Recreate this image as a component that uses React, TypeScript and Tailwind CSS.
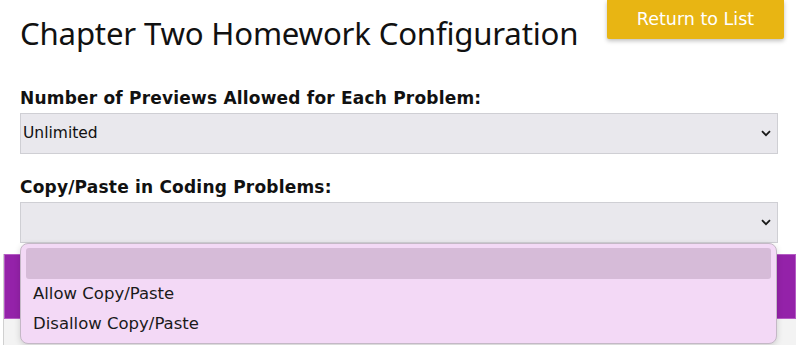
import React from "react";

function Chevron() {
  return (
    <svg width="10" height="7" viewBox="0 0 10 7" className="shrink-0">
      <path d="M1 1.2 L5 5.2 L9 1.2" fill="none" stroke="#1a1a1a" strokeWidth="1.8" />
    </svg>
  );
}

export default function App() {
  return (
    <div className="relative w-[800px] h-[345px] overflow-hidden bg-white">
      <div className="px-5">
        <div className="flex items-start justify-between">
          <h1 className="mt-[13px] text-[31.2px] leading-[40px] text-[#111] [font-family:'Noto_Sans',sans-serif] tracking-[-0.2px]">
            Chapter Two Homework Configuration
          </h1>
          <button className="mr-[-4px] w-[177px] h-[39px] bg-[#e8b513] text-white text-[17.5px] [font-family:'DejaVu_Sans',sans-serif] shadow-[0_2px_4px_rgba(0,0,0,0.25)] rounded-b-[2px]">
            Return to List
          </button>
        </div>
        <div className="mt-[35px] text-[17px] tracking-[0.2px] font-bold text-[#111] [font-family:'DejaVu_Sans',sans-serif] leading-[20px]">
          Number of Previews Allowed for Each Problem:
        </div>
        <div className="mt-[5px] h-[41px] w-[758px] bg-[#e9e8ed] border border-[#cfcfd4] flex items-center justify-between pl-[2px] pr-[6px]">
          <span className="text-[15.5px] text-[#111] [font-family:'DejaVu_Sans',sans-serif]">Unlimited</span>
          <Chevron />
        </div>
        <div className="mt-[23px] text-[17px] tracking-[0.2px] font-bold text-[#111] [font-family:'DejaVu_Sans',sans-serif] leading-[20px]">
          Copy/Paste in Coding Problems:
        </div>
        <div className="mt-[5px] h-[41px] w-[758px] bg-[#e9e8ed] border border-[#cfcfd4] flex items-center justify-end pr-[6px]">
          <Chevron />
        </div>
      </div>
      <div className="mt-[11px] mx-[3px] w-[793px] border-l border-[#d0d0d0]">
        <div className="h-[65px] bg-[#9422a9] border border-[#b55cc4]"></div>
        <div className="h-[40px] bg-[#f3f3f3]"></div>
      </div>
      <div className="absolute left-[20px] top-[243px] w-[757px] h-[101px] rounded-[8px] border border-[#c4b8c6] bg-[#f3d9f6] shadow-[0_2px_6px_rgba(0,0,0,0.15)] px-[5px] pt-[4px] [font-family:'DejaVu_Sans',sans-serif]">
        <div className="h-[31px] rounded-[3px] bg-[#d6bbd8]"></div>
        <div className="h-[30px] pt-[1px] flex items-center pl-[7px] text-[16.5px] text-[#1a1a1a]">Allow Copy/Paste</div>
        <div className="h-[30px] pt-[1px] flex items-center pl-[7px] text-[16.5px] text-[#1a1a1a]">Disallow Copy/Paste</div>
      </div>
    </div>
  );
}
